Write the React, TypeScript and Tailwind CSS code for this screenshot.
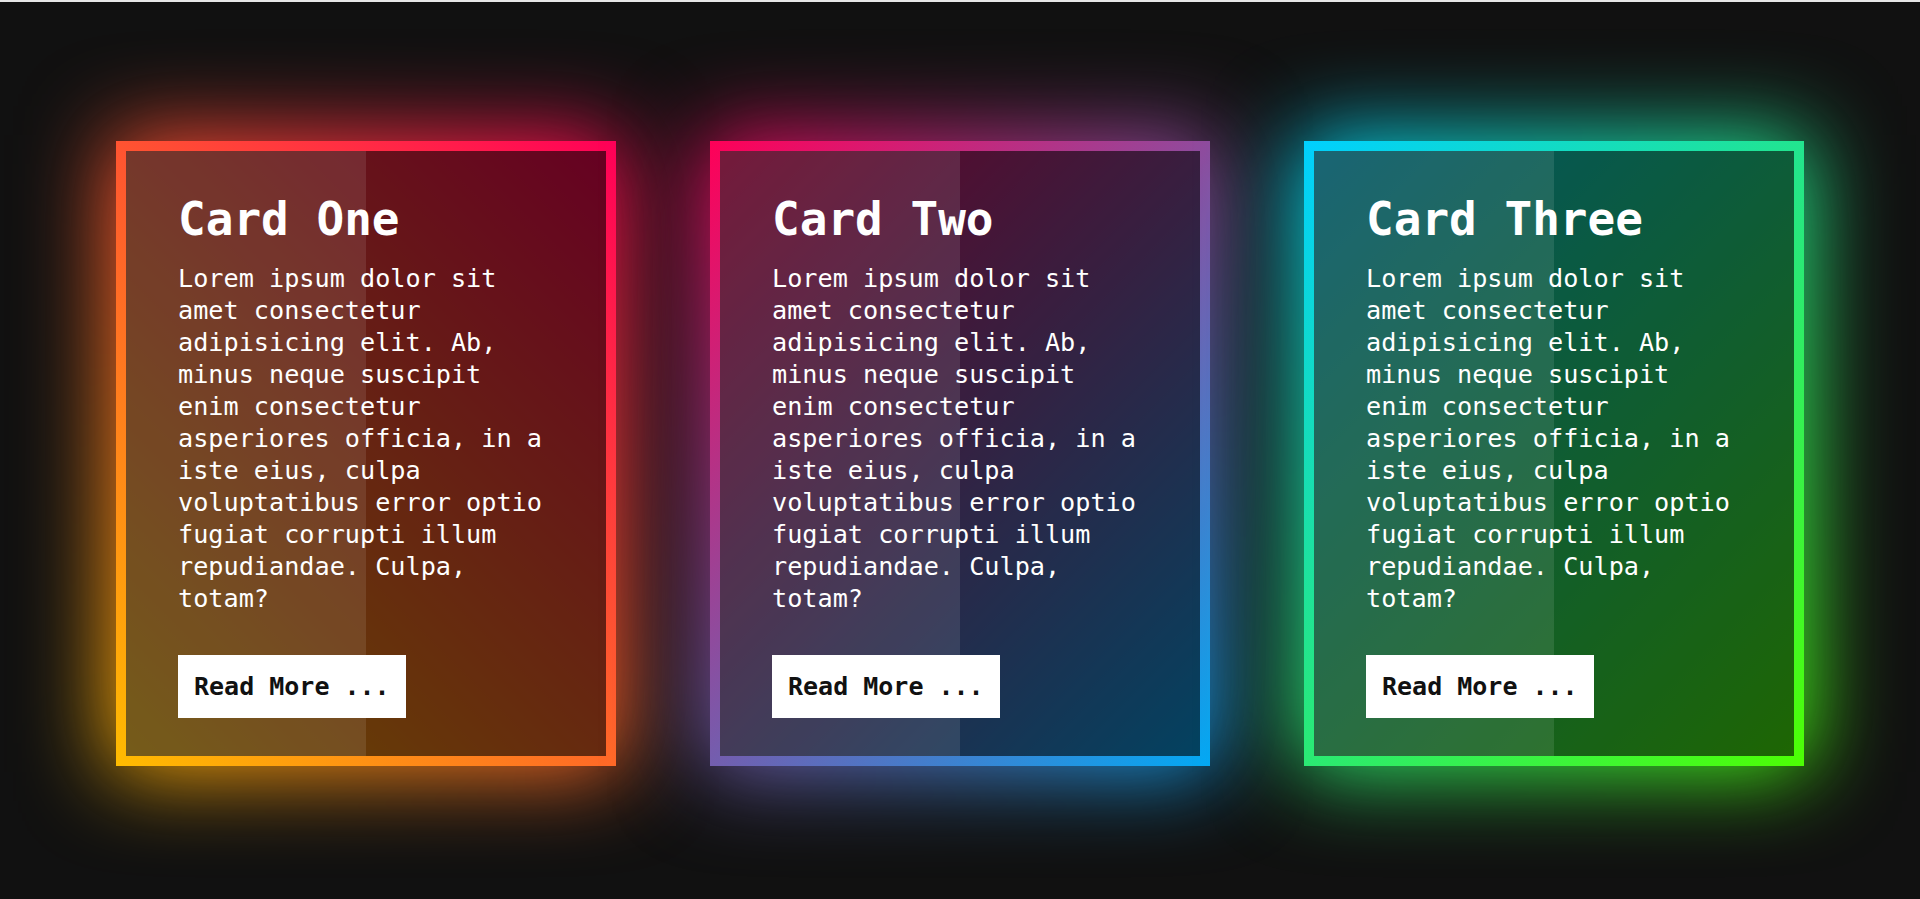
import React from "react";

const text =
  "Lorem ipsum dolor sit amet consectetur adipisicing elit. Ab, minus neque suscipit enim consectetur asperiores officia, in a iste eius, culpa voluptatibus error optio fugiat corrupti illum repudiandae. Culpa, totam?";

type Card = { title: string; grad: string };

const cards: Card[] = [
  { title: "Card One", grad: "bg-[linear-gradient(45deg,#ffbc00,#ff0058)]" },
  { title: "Card Two", grad: "bg-[linear-gradient(315deg,#03a9f4,#ff0058)]" },
  { title: "Card Three", grad: "bg-[linear-gradient(315deg,#4dff03,#00d0ff)]" },
];

function GlowCard({ card }: { card: Card }) {
  return (
    <div className="relative w-[500px] h-[625px] shrink-0">
      <div className={`absolute -inset-[6px] ${card.grad} blur-[44px]`} />
      <div className={`absolute inset-0 ${card.grad}`} />
      <div className="absolute inset-[10px] bg-black/60 overflow-hidden">
        <div className="absolute left-0 top-0 h-full w-1/2 bg-white/10" />
      </div>
      <div className="relative z-10 pt-[51px] pl-[62px] text-white">
        <h2 className="text-[46px] leading-[54px] font-bold">{card.title}</h2>
        <p className="mt-[17px] w-[372px] text-[25.2px] leading-[32px]">{text}</p>
        <div className="mt-[40px] flex h-[63px] w-[228px] items-center bg-white pl-[16px] text-[25px] font-bold text-[#111]">
          Read More ...
        </div>
      </div>
    </div>
  );
}

export default function App() {
  return (
    <div className="min-h-screen bg-[#111] font-['DejaVu_Sans_Mono',monospace]">
      <div className="h-[2px] bg-[#e6e6e6]" />
      <div className="flex justify-center gap-[94px] pt-[139px] pb-[131px]">
        {cards.map((c) => (
          <GlowCard key={c.title} card={c} />
        ))}
      </div>
    </div>
  );
}
